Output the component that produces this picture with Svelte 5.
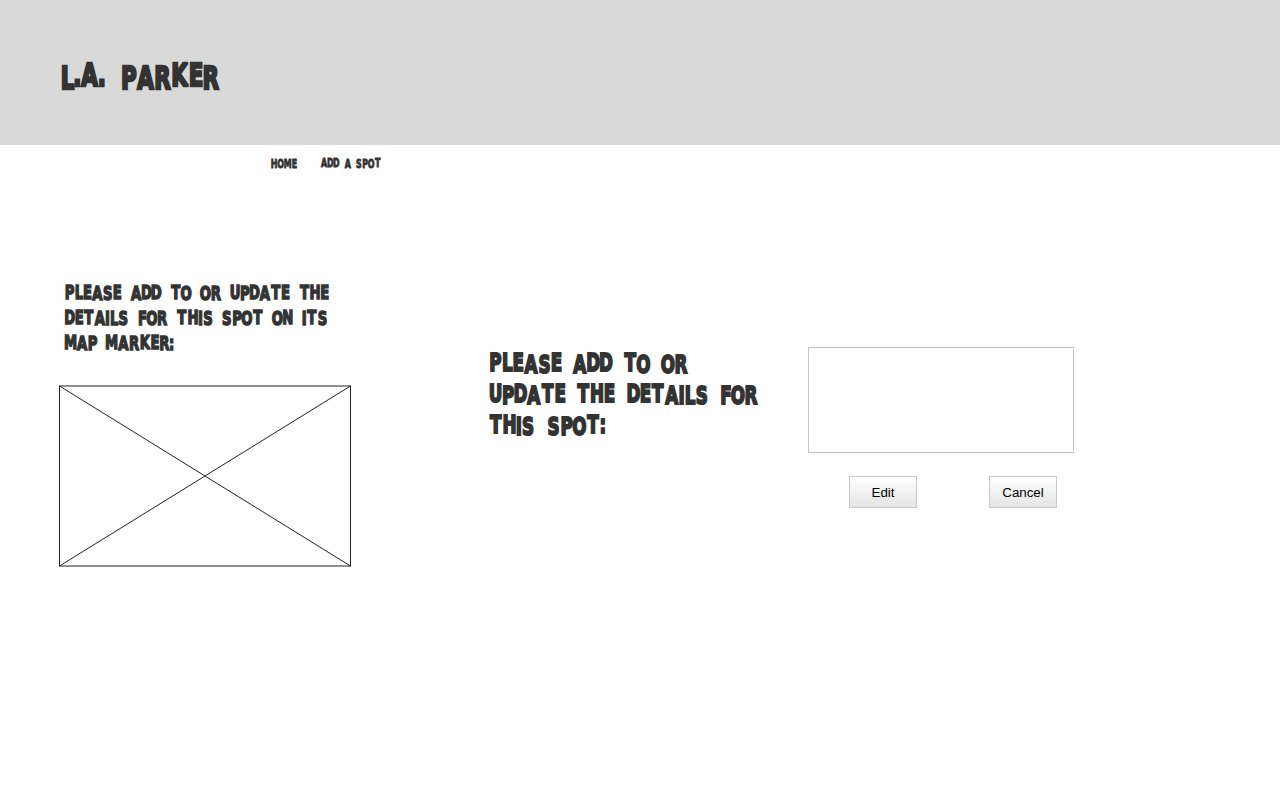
<script>
  // Relative ink widths of the condensed display letters.
  const inks = {
    P: 11, L: 10, E: 10, A: 13, S: 11.5, D: 11.5, T: 12.5, O: 11.5, R: 11.5, U: 11.5,
    H: 12, I: 4.5, F: 10, N: 11, M: 14, K: 13, '.': 5, ':': 4.5
  };
  // Distance from the middle of a letter's advance to the middle of its ink, in em.
  const lean = { P: -0.01, L: -0.02, E: -0.01, D: 0, R: 0, F: -0.01, K: 0 };
  const squeeze = 0.66;

  // A word is [text, start, end, bounce]; each bounce digit drops its letter by that many steps.
  function place([text, from, to, bounce], baseline, step, size) {
    const chars = [...text];
    const gap = 0.6;
    const total = chars.reduce((sum, c) => sum + inks[c], 0) + gap * (chars.length - 1);
    const unit = (to - from) / total;
    let cursor = from;
    const xs = chars.map((c) => {
      const centre = cursor + (inks[c] * unit) / 2;
      cursor += (inks[c] + gap) * unit;
      return (centre / squeeze - (lean[c] ?? 0) * size).toFixed(2);
    });
    const ys = chars.map((_, i) => (baseline + Number(bounce[i]) * step).toFixed(2));
    return { text, x: xs.join(' '), y: ys.join(' ') };
  }

  const logo = {
    width: 160, height: 34, size: 32.4, weight: 2.6, step: 3,
    lines: [[26.4, [['L.A.', 0.8, 45, '1000'], ['PARKER', 61.4, 158.5, '111001']]]]
  };
  const home = {
    width: 26, height: 14, size: 12, weight: 0.9, step: 1,
    lines: [[11.7, [['HOME', 0, 26, '0000']]]]
  };
  const addSpot = {
    width: 60, height: 14, size: 12, weight: 0.9, step: 1,
    lines: [[10.7, [['ADD', 0, 18, '000'], ['A', 23.5, 30, '1'], ['SPOT', 35, 60, '1110']]]]
  };
  const mapNote = {
    width: 270, height: 75, size: 20, weight: 1.6, step: 1.4,
    lines: [
      [18.9, [['PLEASE', 0, 56.3, '000110'], ['ADD', 65.9, 96, '100'], ['TO', 105.5, 126, '01'], ['OR', 135.3, 156, '11'], ['UPDATE', 165.5, 224.5, '010100'], ['THE', 234.3, 263.8, '000']]],
      [43.9, [['DETAILS', 0, 63, '0001111'], ['FOR', 73.2, 102, '111'], ['THIS', 111.4, 148, '0011'], ['SPOT', 156.9, 198, '1110'], ['ON', 207.3, 227.7, '10'], ['ITS', 237.3, 262.3, '101']]],
      [68.9, [['MAP', 0, 31.8, '011'], ['MARKER:', 40.6, 108.5, '0110011']]]
    ]
  };
  const spotNote = {
    width: 272, height: 93, size: 25.4, weight: 2, step: 1.7,
    lines: [
      [25, [['PLEASE', 0.4, 72.7, '000110'], ['ADD', 83.9, 123, '100'], ['TO', 134.7, 160.4, '01'], ['OR', 172.5, 198.3, '11']]],
      [56, [['UPDATE', 0.6, 76.3, '010100'], ['THE', 87.6, 125.6, '000'], ['DETAILS', 138.3, 218.8, '0001111'], ['FOR', 231.4, 268.2, '111']]],
      [87, [['THIS', 0, 45.3, '0011'], ['SPOT:', 58.4, 116.2, '11100']]]
    ]
  };
</script>

{#snippet lettering(block)}
  <svg class="lettering" width={block.width} height={block.height} font-size={block.size} stroke-width={block.weight}>
    {#each block.lines as [baseline, words]}
      {#each words as word}
        {@const w = place(word, baseline, block.step, block.size)}
        <text x={w.x} y={w.y} transform="scale({squeeze} 1)">{w.text}</text>
      {/each}
    {/each}
  </svg>
{/snippet}

<div class="page">
  <header>
    <h1>{@render lettering(logo)}</h1>
  </header>
  <nav>
    <span>{@render lettering(home)}</span>
    <span>{@render lettering(addSpot)}</span>
  </nav>
  <main>
    <section class="map">
      <h2>{@render lettering(mapNote)}</h2>
      <svg class="placeholder" width="292" height="182" viewBox="0 0 292 182">
        <rect x="0.5" y="1" width="291" height="180" />
        <path d="M0.5 1 L291.5 181 M0.5 181 L291.5 1" />
      </svg>
    </section>
    <section class="spot">
      <h2>{@render lettering(spotNote)}</h2>
    </section>
    <form>
      <textarea></textarea>
      <div class="actions">
        <button type="button">Edit</button>
        <button type="button">Cancel</button>
      </div>
    </form>
  </main>
</div>

<style>
  :global(body) {
    margin: 0;
    background: #fefefe;
  }
  .page {
    width: 1280px;
    height: 800px;
    overflow: hidden;
    background: #fefefe;
    font-family: 'Liberation Sans', Arial, sans-serif;
  }
  header {
    box-sizing: border-box;
    height: 145px;
    padding: 60px 0 0 60px;
    background: #d9d9d9;
  }
  h1,
  h2 {
    margin: 0;
    font-size: 16px;
  }
  .lettering {
    display: block;
    overflow: visible;
    font-family: 'DejaVu Sans', sans-serif;
    font-weight: 700;
  }
  .lettering text {
    fill: #333;
    stroke: #333;
    stroke-linejoin: miter;
    stroke-miterlimit: 2;
    text-anchor: middle;
  }
  nav {
    display: flex;
    gap: 24px;
    padding: 11px 0 0 271px;
    height: 100px;
  }
  main {
    display: grid;
    grid-template-columns: 430px 319px 266px;
    align-items: start;
    padding-left: 59px;
  }
  .map {
    padding-top: 24px;
  }
  .map h2 {
    padding-left: 6px;
    margin-bottom: 30px;
  }
  .placeholder {
    display: block;
    fill: none;
    stroke: #222;
    stroke-width: 1;
  }
  .spot {
    padding-top: 90px;
  }
  form {
    padding-top: 91px;
  }
  textarea {
    display: block;
    box-sizing: border-box;
    width: 266px;
    height: 106px;
    margin: 0;
    border: 1px solid #c4c4c4;
    background: #fefefe;
    resize: none;
  }
  .actions {
    display: flex;
    gap: 72px;
    padding: 23px 0 0 41px;
  }
  button {
    box-sizing: border-box;
    width: 68px;
    height: 32px;
    padding: 0;
    border: 1px solid #c9c9c9;
    border-radius: 0;
    background: linear-gradient(#fff, #e4e4e4);
    color: #000;
    font: 13.33px 'Liberation Sans', Arial, sans-serif;
  }
</style>
